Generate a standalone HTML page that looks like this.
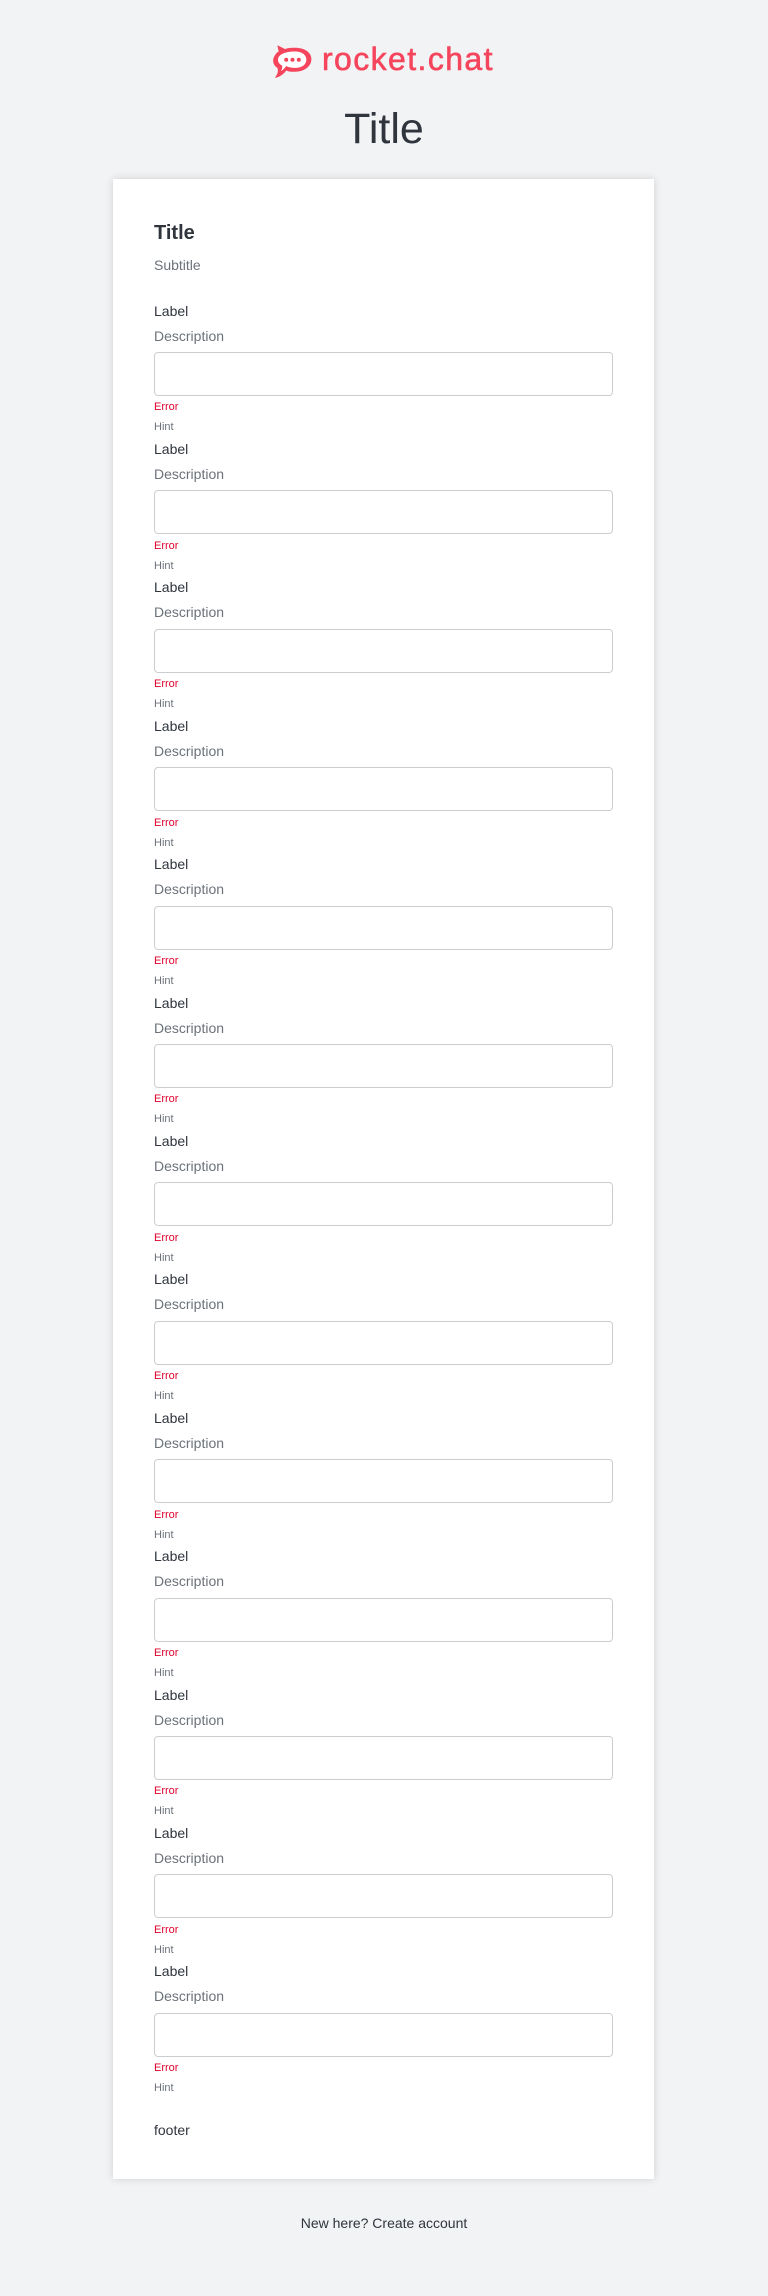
<!DOCTYPE html>
<html><head><meta charset="utf-8"><style>
*{margin:0;padding:0;box-sizing:border-box}
body{width:768px;height:2296px;background:#f2f3f5;font-family:"Liberation Sans",sans-serif;color:#2f343d;position:relative;overflow:hidden}
.logo{position:absolute;left:272px;top:44px;height:34px;display:flex;align-items:center}
.logo span{font-size:32px;color:#f5455c;letter-spacing:1.4px;margin-left:9px;line-height:34px;position:relative;top:-2px;-webkit-text-stroke:0.6px #f5455c}
h1{position:absolute;top:105px;width:100%;text-align:center;font-size:43px;font-weight:normal;line-height:48px}
.card{position:absolute;left:113px;top:179px;width:541px;height:2000px;background:#fff;box-shadow:0 0 8px rgba(0,0,0,.15)}
.ct{position:absolute;left:41px;font-size:20px;font-weight:bold;line-height:24px}
.st{position:absolute;left:41px;font-size:14px;color:#6c727a;line-height:18px}
.fields{position:absolute;left:41px;top:121.6px;width:459px}
.f{height:138.4px}
.l{font-size:14px;line-height:20px;margin-bottom:5px}
.d{font-size:14px;line-height:20px;color:#6c727a;margin-bottom:6.4px}
.i{height:44px;border:1px solid #cbced1;border-radius:4px;margin-bottom:3.5px}
.e{font-size:11px;line-height:16px;color:#e0022b;margin-bottom:4px}
.h{font-size:11px;line-height:16px;color:#6c727a}
.foot{position:absolute;left:41px;top:1942px;font-size:14px;line-height:18px}
.nh{position:absolute;top:2214px;width:100%;text-align:center;font-size:14px;line-height:18px}
</style></head><body>
<div class="logo"><svg width="41" height="34" viewBox="0 0 32 27"><path d="M4 1 L10 4 C13 3 16 3 18 3 C26 3 31 7 31 12 C31 18 25 22 18 22 C15 22 13 22 11 21 C9 24 6 26 2 27 C4 24 5 22 4 19 C1 17 0 14 1 11 C2 9 3 7 5 6 Z" fill="#f5455c"/><path d="M18 6 C24 6 27 9 27 12.5 C27 16 24 19 18 19 C15 19 13 18.5 11 17.5 C10 19 8 21 7 21.5 C8 19 8 18 7.5 17 C5 15.5 4.5 14 4.5 12.5 C4.5 9 9 6 18 6 Z" fill="#fff"/><circle cx="11" cy="12.5" r="1.6" fill="#f5455c"/><circle cx="16" cy="12.5" r="1.6" fill="#f5455c"/><circle cx="21" cy="12.5" r="1.6" fill="#f5455c"/></svg><span>rocket.chat</span></div>
<h1>Title</h1>
<div class="card">
<div class="ct" style="top:42px">Title</div>
<div class="st" style="top:77px">Subtitle</div>
<div class="fields">
<div class="f"><div class="l">Label</div><div class="d">Description</div><div class="i"></div><div class="e">Error</div><div class="h">Hint</div></div>
<div class="f"><div class="l">Label</div><div class="d">Description</div><div class="i"></div><div class="e">Error</div><div class="h">Hint</div></div>
<div class="f"><div class="l">Label</div><div class="d">Description</div><div class="i"></div><div class="e">Error</div><div class="h">Hint</div></div>
<div class="f"><div class="l">Label</div><div class="d">Description</div><div class="i"></div><div class="e">Error</div><div class="h">Hint</div></div>
<div class="f"><div class="l">Label</div><div class="d">Description</div><div class="i"></div><div class="e">Error</div><div class="h">Hint</div></div>
<div class="f"><div class="l">Label</div><div class="d">Description</div><div class="i"></div><div class="e">Error</div><div class="h">Hint</div></div>
<div class="f"><div class="l">Label</div><div class="d">Description</div><div class="i"></div><div class="e">Error</div><div class="h">Hint</div></div>
<div class="f"><div class="l">Label</div><div class="d">Description</div><div class="i"></div><div class="e">Error</div><div class="h">Hint</div></div>
<div class="f"><div class="l">Label</div><div class="d">Description</div><div class="i"></div><div class="e">Error</div><div class="h">Hint</div></div>
<div class="f"><div class="l">Label</div><div class="d">Description</div><div class="i"></div><div class="e">Error</div><div class="h">Hint</div></div>
<div class="f"><div class="l">Label</div><div class="d">Description</div><div class="i"></div><div class="e">Error</div><div class="h">Hint</div></div>
<div class="f"><div class="l">Label</div><div class="d">Description</div><div class="i"></div><div class="e">Error</div><div class="h">Hint</div></div>
<div class="f"><div class="l">Label</div><div class="d">Description</div><div class="i"></div><div class="e">Error</div><div class="h">Hint</div></div>
</div>
<div class="foot">footer</div>
</div>
<div class="nh">New here? Create account</div>
</body></html>
